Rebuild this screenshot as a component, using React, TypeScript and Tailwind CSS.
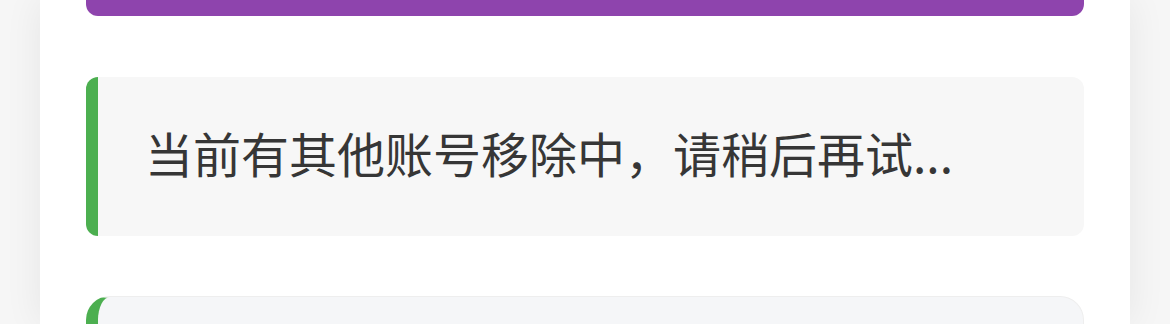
export default function App() {
  return (
    <div
      className="h-[324px] overflow-hidden bg-[#f6f6f6] px-[40px]"
      style={{ fontFamily: '"Noto Sans CJK SC", "Noto Sans", sans-serif' }}
    >
      <div className="h-full bg-white px-[46px] shadow-[0_0_36px_rgba(0,0,0,0.07)]">
        <div className="h-[16px] rounded-b-[12px] bg-[#8e44ad]" />

        <div className="mt-[61px] flex h-[159px] items-center rounded-[12px] border-l-[12px] border-[#4caf50] bg-[#f7f7f7] pb-[10px] pl-[47px]">
          <p className="text-[48px] leading-none text-[#363636]">当前有其他账号移除中，请稍后再试...</p>
        </div>

        <div className="mt-[60px] h-[160px] rounded-[24px] border border-l-[12px] border-[#eeeeee] border-l-[#4caf50] bg-[#f5f6f8]" />
      </div>
    </div>
  );
}
